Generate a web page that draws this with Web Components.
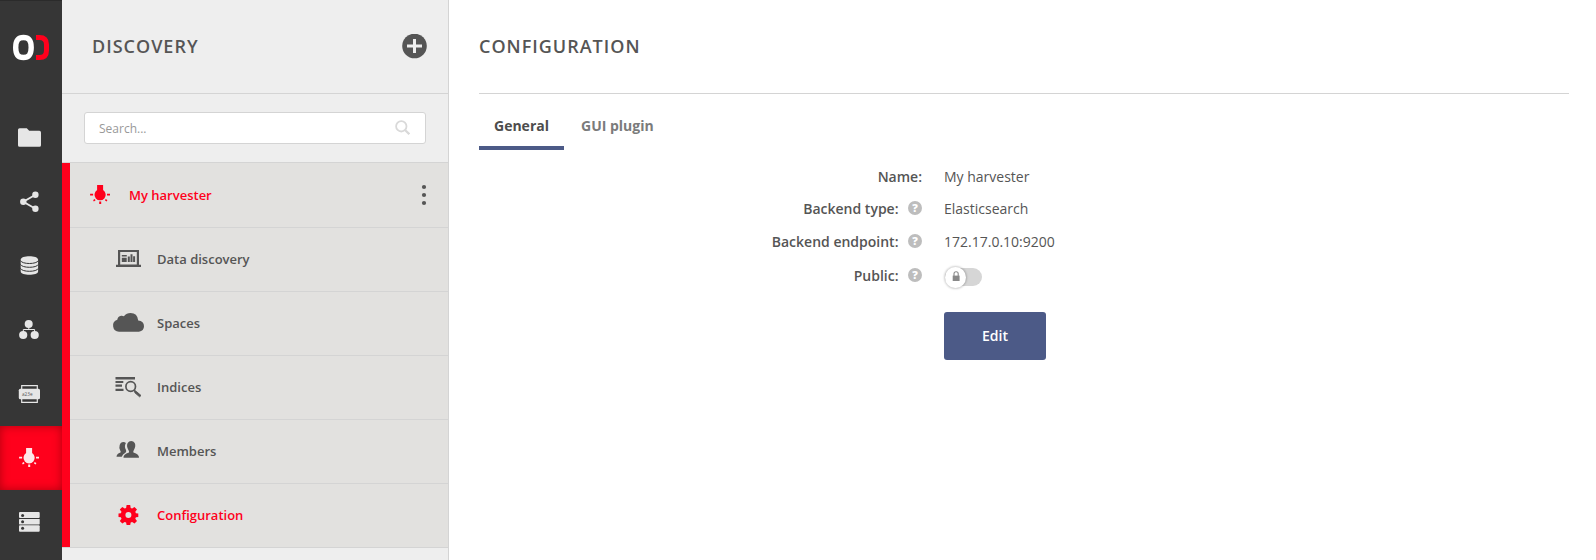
<!DOCTYPE html>
<html lang="en">
<head>
<meta charset="utf-8">
<title>Discovery</title>
<style>
html,body{margin:0;height:100%;overflow:hidden;background:#fff}
body{font-family:"Open Sans",sans-serif;color:#555;font-size:14px}
</style>
</head>
<body>
<od-app></od-app>
<script>
const bulb = `<path d="M-3.2-9.8h6v5a5.6 5.6 0 1 1-6 0z"/><path d="M-10.2-1.1h3v1.700h-3zM6.700-1.1h3v1.700h-3zM-1.1 6.6h2v2.6h-2zM-7.2 5.2l1.8-1 .6 1.4-1.7 1zM7.1 5.2l-1.8-1-.6 1.4 1.7 1z"/>`;
const ICONS = {
  folder: `<path d="M19.600 22.200h7.200l2.400 2.600h10.200q1.600 0 1.600 1.600v12.800q0 1.600-1.600 1.600H19.600q-1.600 0-1.600-1.600V23.800q0-1.600 1.600-1.600z"/>`,
  share: `<path d="M35.500 24.800L23.300 31.800l12.200 7" fill="none" stroke="currentColor" stroke-width="1.900"/><circle cx="35.400" cy="24.800" r="3.200"/><circle cx="23.300" cy="31.800" r="3.200"/><circle cx="35.400" cy="38.800" r="3.200"/>`,
  database: `<path d="M20.700 25.600c0-4.600 17.400-4.600 17.400 0v11.800c0 4.400-17.400 4.400-17.400 0z"/><path d="M20.400 26.500c1.500 4 16.500 4 18 0M20.400 30.300c1.500 4 16.500 4 18 0M20.400 34.300c1.500 4 16.500 4 18 0" fill="none" stroke="#363636" stroke-width="1"/>`,
  groups: `<circle cx="28.700" cy="26" r="4"/><ellipse cx="23.200" cy="37" rx="4.100" ry="4"/><ellipse cx="34.700" cy="37" rx="4.100" ry="4"/><path d="M23.300 35v-3.500h11.300V35M28.800 31.500V28" fill="none" stroke="currentColor" stroke-width="1"/>`,
  handle: `<path d="M21.700 27v-3.300h15.600V27M21.700 36v4.300h15.600V36" fill="none" stroke="currentColor" stroke-width="1.200"/><rect x="18.800" y="26.800" width="21.200" height="10.400" rx="1.500"/><text x="22" y="34.200" font-size="5" textLength="10.500" lengthAdjust="spacingAndGlyphs" fill="#555">a23e</text>`,
  bulb: `<g transform="translate(29.300 31.900)">${bulb}</g>`,
  servers: `<rect x="19" y="22" width="20.700" height="6" rx="1"/><rect x="19" y="28.900" width="20.700" height="5.500" rx=".6"/><rect x="19" y="35.300" width="20.700" height="6.500" rx="1"/><g fill="#363636"><circle cx="22.600" cy="25.400" r="1.500"/><circle cx="22.600" cy="31.700" r="1.500"/><circle cx="22.600" cy="38.300" r="1.500"/></g>`,
  harvester: `<g transform="translate(15.300 31.800)">${bulb}</g>`,
  laptop: `<path fill-rule="evenodd" d="M8 23h21v14.800h2V40H6v-2.200h2zM10.200 25.100v12.300h16.600V25.100z"/><path d="M11.800 28h5v1.500h-5zM11.800 30.800h4.900V35h-4.900zM17.800 29.500h2V35h-2zM20.500 27.300h2V35h-2zM23.100 29.200h2V35h-2z"/>`,
  cloud: `<path d="M9 40.700a6.100 6.100 0 0 1-1.700-11.900q.5-3.600 3.800-4.100 1.600-.2 2.800.5Q16.600 22 20.500 22q6.900 0 7.700 7.400 5.800.5 5.800 5.800 0 4.700-5.100 5.500z"/>`,
  indices: `<path d="M5.500 22H25v2.600H5.500zM5.500 26h7.800v2H5.500zM5.500 29.600h6.500v2.200H5.500zM5.500 33.700h8v2.200h-8z"/><circle cx="20.700" cy="31.500" r="4.800" fill="none" stroke="currentColor" stroke-width="1.700"/><path d="M24.200 35l2.200 1.500 4.600 4-1.400 1.300-4.700-4z" stroke="currentColor" stroke-width=".9"/>`,
  members: `<path d="M6.500 37.800q0-2.600 4-4.200.6-.7-.4-2.400-1.200-2.900-.4-5.300Q10.600 23 13.300 23q1.600 0 2.600.9-2 3.200.1 7.100.6 1.200-.3 2.500-3.200 1.800-4 4.300z"/><path d="M13.500 38.800q-.5-3.500 5.500-5.300.4-1.300-.6-2.500-2.300-4.200-.7-7 1.200-1.900 3.500-1.900t3.500 1.900q1.500 2.800-.8 7-.9 1.200-.5 2.500 6 1.800 5.600 5.300z"/>`,
  gear: `<g transform="translate(18.400 32)"><path fill-rule="evenodd" d="M-1.800-9.900h3.600l.5 2.900 1.400.6 2.400-1.700 2.500 2.500L6.900-3.200l.6 1.400 2.400.4v3.300l-2.400.4-.6 1.400 1.700 2.400-2.500 2.500-2.400-1.700-1.400.6-.5 2.400h-3.600l-.5-2.400-1.400-.6-2.400 1.700-2.500-2.500 1.700-2.400-.6-1.400-2.400-.4v-3.300l2.400-.4.600-1.400-1.700-2.400 2.500-2.500 2.400 1.700 1.400-.6zM0-3A3 3 0 1 0 0 3 3 3 0 0 0 0-3z"/></g>`,
  dots: `<circle cx="6" cy="24" r="2.100"/><circle cx="6" cy="32" r="2.100"/><circle cx="6" cy="40" r="2.100"/>`,
  plus: `<circle cx="12.500" cy="12" r="12.300"/><path d="M12.500 5v14M5 12.100h15" stroke="#eee" stroke-width="3"/>`,
  search: `<circle cx="6.300" cy="6.300" r="5.200" fill="none" stroke="currentColor" stroke-width="1.800"/><path d="M10 10l4.300 4.200" stroke="currentColor" stroke-width="2.200"/>`,
  lock: `<path d="M.7 4.600h6.900v5.400H.7z"/><path d="M2 5V2.800Q2 .8 4.100.8t2.100 2V5" fill="none" stroke="currentColor" stroke-width="1.100"/>`
};
const define = (name, css, html) => customElements.define(name, class extends HTMLElement {
  connectedCallback() {
    if (this.shadowRoot) return;
    this.attachShadow({ mode: 'open' }).innerHTML = `<style>${css}</style>` + (typeof html === 'function' ? html(this) : html);
  }
});

define('od-icon', `:host{display:block;flex:none}svg{display:block;fill:currentColor}`, el => {
  const [w, h] = el.getAttribute('size').split(' ');
  return `<svg width="${w}" height="${h}" viewBox="0 0 ${w} ${h}">${ICONS[el.getAttribute('name')]}</svg>`;
});

define('od-rail-item', `:host{display:block;height:64px;color:#e6e6e6}
  :host([active]){background:#ff001c;color:#ffe6e8;box-shadow:inset 0 0 10px rgba(100,0,0,.5)}`,
  el => `<od-icon name="${el.getAttribute('icon')}" size="62 64"></od-icon>`);

define('od-rail', `:host{display:flex;flex-direction:column;width:62px;flex:none;background:#363636;box-shadow:inset 0 1px #2b2b2b;overflow:hidden}
  .logo{height:106px;flex:none}svg{display:block}od-rail-item{flex:none}`,
  `<div class="logo"><svg width="62" height="106" fill="none" stroke-width="5"><path d="M23.500 37.500c5.400 0 7.700 2.800 7.700 10s-2.300 10-7.700 10-7.800-2.800-7.800-10 2.400-10 7.800-10z" stroke="#fff" stroke-width="5.400"/><path d="M36 37.400h3.500q7 0 7 7v6.200q0 7-7 7H36" stroke="#ff001c"/></svg></div>
  <od-rail-item icon="folder"></od-rail-item><od-rail-item icon="share"></od-rail-item><od-rail-item icon="database"></od-rail-item>
  <od-rail-item icon="groups"></od-rail-item><od-rail-item icon="handle"></od-rail-item><od-rail-item icon="bulb" active></od-rail-item><od-rail-item icon="servers"></od-rail-item>`);

define('od-search', `:host{display:flex;box-sizing:border-box;height:32px;margin:18px 22px;padding:0 15px 0 14px;border:1px solid #d4d4d4;border-radius:3px;background:#fff;align-items:center;justify-content:space-between;font-size:12px;color:#999}
  od-icon{color:#d9d9d9;margin-bottom:1px}`, `<span><slot></slot></span><od-icon name="search" size="15 15"></od-icon>`);

define('od-menu-item', `:host{display:flex;box-sizing:border-box;height:64px;align-items:center;border-top:1px solid #d4d4d4;padding-left:40px;font-size:13px;font-weight:600}
  :host([root]){border-top:0;padding:0 17px 0 15px}
  :host([active]){color:#ff001c}
  .icon{margin-top:-1px}:host([root]) .icon{margin-top:0}
  .label{flex:1;margin-bottom:2px}:host([root]) .label{margin-bottom:0}.more{color:#555}`,
  el => { const root = el.hasAttribute('root');
    return `<od-icon class="icon" name="${el.getAttribute('icon')}" size="${root ? 44 : 47} 64"></od-icon><span class="label"><slot></slot></span>` + (root ? `<od-icon class="more" name="dots" size="13 64"></od-icon>` : ''); });

define('od-heading', `:host{display:flex;box-sizing:border-box;height:94px;align-items:center;justify-content:space-between;border-bottom:1px solid #d4d4d4;font-size:18px;font-weight:600;letter-spacing:1px;line-height:24px}
  span{margin-bottom:2px}`, `<span><slot></slot></span><slot name="action"></slot>`);

define('od-sidebar', `:host{display:flex;flex-direction:column;box-sizing:border-box;width:387px;flex:none;background:#eee;border-right:1px solid #d4d4d4}
  od-heading{padding:0 21px 0 30px}od-heading od-icon{color:#555}
  .menu{border-top:1px solid #d4d4d4;border-bottom:1px solid #d4d4d4}
  .entries{border-left:8px solid #ff001c;background:#e2e1df}`,
  `<od-heading>DISCOVERY<od-icon slot="action" name="plus" size="25 25"></od-icon></od-heading>
  <od-search>Search...</od-search>
  <div class="menu"><div class="entries">
  <od-menu-item root active icon="harvester">My harvester</od-menu-item>
  <od-menu-item icon="laptop">Data discovery</od-menu-item>
  <od-menu-item icon="cloud">Spaces</od-menu-item>
  <od-menu-item icon="indices">Indices</od-menu-item>
  <od-menu-item icon="members">Members</od-menu-item>
  <od-menu-item active icon="gear">Configuration</od-menu-item></div></div>`);

define('od-tabs', `:host{display:flex;height:56px;font-weight:700;line-height:20px}
  span{box-sizing:border-box;height:56px;padding:22px 15px 0;color:#7b7b7b;letter-spacing:0}
  .on{color:#4d4d4d;border-bottom:4px solid #4c5a87;width:85px}.on+span{padding-left:17px}`,
  `<span class="on">General</span><span>GUI plugin</span>`);

define('od-toggle', `:host{display:flex;width:37px;height:18px;border-radius:9px;background:#d6d6d6;align-items:center}
  .knob{display:flex;flex:none;width:21px;height:21px;border-radius:50%;background:#fff;box-shadow:0 0 2px 1px rgba(0,0,0,.18);align-items:center;justify-content:center;color:#888}
  od-icon{margin:-1px 0 0 1px}`, `<div class="knob"><od-icon name="lock" size="8.500 11"></od-icon></div>`);

define('od-field', `:host{display:flex;height:var(--row,32px);line-height:20px;align-items:center}
  .label{width:443px;display:flex;justify-content:flex-end;align-items:center;font-weight:600;gap:9.5px}
  .value{padding-left:22px}
  .help{width:14px;height:14px;border-radius:50%;background:#bdbdbd;color:#fff;font-size:11px;font-weight:800;line-height:14px;text-align:center;margin-top:-2px}`,
  el => `<span class="label">${el.getAttribute('label')}:${el.hasAttribute('help') ? '<span class="help">?</span>' : ''}</span><div class="value"><slot></slot></div>`);

define('od-button', `:host{display:flex;box-sizing:border-box;width:102px;height:48px;padding-bottom:2px;align-items:center;justify-content:center;border-radius:3px;background:#4c5a87;color:#fff;font-weight:600}`, `<slot></slot>`);

define('od-main', `:host{display:block;flex:1;padding:0 27px 0 30px}
  .form{padding-top:11px}.last{--row:36px}od-toggle{margin:2px 0 0 1px}od-button{margin:18px 0 0 465px}`,
  `<od-heading>CONFIGURATION</od-heading><od-tabs></od-tabs>
  <div class="form"><od-field label="Name">My harvester</od-field>
  <od-field label="Backend type" help>Elasticsearch</od-field>
  <od-field label="Backend endpoint" help style="--row:33px">172.17.0.10:9200</od-field>
  <od-field class="last" label="Public" help><od-toggle></od-toggle></od-field>
  <od-button>Edit</od-button></div>`);

define('od-app', `:host{display:flex;height:560px}`, `<od-rail></od-rail><od-sidebar></od-sidebar><od-main></od-main>`);
</script>
</body>
</html>
